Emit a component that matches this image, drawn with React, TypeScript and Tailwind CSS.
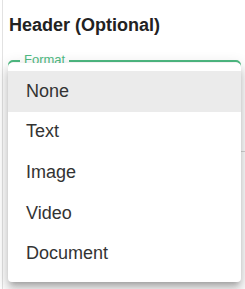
import React from "react";

const items = ["None", "Text", "Image", "Video", "Document"];

export default function App() {
  return (
    <div
      className="relative w-[245px] h-[289px] overflow-hidden bg-white"
      style={{ fontFamily: '"Liberation Sans", Arial, sans-serif' }}
    >
      <div className="absolute left-[2px] top-0 bottom-0 w-[1px] bg-[#e2e2e2]" />
      <div className="pl-[9px] pt-[13px]">
        <div className="text-[18px] font-bold leading-[24px] text-[#222]">Header (Optional)</div>
      </div>
      <div className="relative ml-[8px] mr-[4px] mt-[23px] h-[56px] rounded-[5px] border-2 border-[#4fbb83]">
        <span className="absolute left-[10px] top-[-10px] bg-white px-[4px] text-[13px] leading-[16px] text-[#4fbb83]">
          Format
        </span>
      </div>
      <div className="ml-[100px] mt-[35px] h-[1px] bg-[#d6d6d6]" />
      <div className="absolute left-[8px] top-[63px] w-[233px] rounded-[4px] bg-white py-[8px] shadow-[0px_5px_5px_-3px_rgba(0,0,0,0.2),0px_8px_10px_1px_rgba(0,0,0,0.14),0px_3px_14px_2px_rgba(0,0,0,0.12)]">
        {items.map((t, i) => (
          <div
            key={t}
            className={`flex h-[40.6px] items-center pl-[18px] text-[18px] text-[#333] ${i === 0 ? "bg-[#ebebeb]" : ""}`}
          >
            {t}
          </div>
        ))}
      </div>
    </div>
  );
}
